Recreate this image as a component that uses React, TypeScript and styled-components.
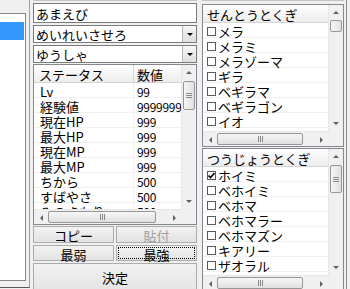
import styled, { createGlobalStyle } from 'styled-components';

const GlobalStyle = createGlobalStyle`
  * { box-sizing: border-box; }
  body {
    margin: 0;
    background: #f0f0f0;
    font-family: "Noto Sans CJK JP", "Noto Sans", sans-serif;
    font-size: 13px;
    color: #000;
  }
`;

const statusRows = [
  ['Lv', '99'],
  ['経験値', '9999999'],
  ['現在HP', '999'],
  ['最大HP', '999'],
  ['現在MP', '999'],
  ['最大MP', '999'],
  ['ちから', '500'],
  ['すばやさ', '500'],
  ['みのまもり', '500'],
  ['かしこさ', '500'],
];

const battleSkills = ['メラ', 'メラミ', 'メラゾーマ', 'ギラ', 'ベギラマ', 'ベギラゴン', 'イオ', 'イオラ'];
const fieldSkills = ['ホイミ', 'ベホイミ', 'ベホマ', 'ベホマラー', 'ベホマズン', 'キアリー', 'ザオラル', 'ザオリク'];

const Window = styled.div`
  display: flex;
  width: 350px;
  height: 289px;
  overflow: hidden;
  background: #f0f0f0;
`;

const LeftPane = styled.div`
  flex: none;
  width: 30px;
  height: 288px;
  padding-top: 13px;
  border-right: 1px solid #a0a0a0;
  border-bottom: 1px solid #5a5a5a;
`;

const LeftList = styled.div`
  width: 26px;
  height: 268px;
  padding-top: 8px;
  background: #fff;
  border: 1px solid #828790;
  border-left: none;
`;

const Selection = styled.div`
  width: 24px;
  height: 18px;
  background: #3399ff;
`;

const Column = styled.div<{ $w: number; $ml: number }>`
  flex: none;
  display: flex;
  flex-direction: column;
  width: ${p => p.$w}px;
  margin-left: ${p => p.$ml}px;
`;

const TopClip = styled.div<{ $mb: number }>`
  height: 2px;
  margin-bottom: ${p => p.$mb}px;
  border-bottom: 1px solid #c4c4c4;
`;

const TextBox = styled.div`
  height: 20px;
  padding: 1px 0 0 2px;
  line-height: 18px;
  background: #fff;
  border: 1px solid #7a7a7a;
`;

const Combo = styled.div`
  display: flex;
  height: 18px;
  margin-top: 2px;
  background: #fff;
  border: 1px solid #7a7a7a;
`;

const ComboText = styled.div`
  flex: 1;
  padding: 1px 0 0 2px;
  line-height: 15px;
`;

const DropButton = styled.div`
  display: flex;
  align-items: center;
  justify-content: center;
  width: 14px;
  border-left: 1px solid #b5b5b5;
  background: linear-gradient(#f6f6f6, #dedede);
  &::after {
    content: '';
    border-left: 3px solid transparent;
    border-right: 3px solid transparent;
    border-top: 3px solid #000;
  }
`;

const ListFrame = styled.div<{ $h: number; $mt: number }>`
  display: grid;
  grid-template-columns: 1fr 15px;
  grid-template-rows: 1fr 15px;
  height: ${p => p.$h}px;
  margin-top: ${p => p.$mt}px;
  background: #fff;
  border: 1px solid #828790;
`;

const ListContent = styled.div`
  overflow: hidden;
`;

const Header = styled.div`
  display: flex;
  height: 18px;
  padding-top: 2px;
  line-height: 15px;
  background: linear-gradient(#ffffff, #ececec);
  border-bottom: 1px solid #d5d5d5;
`;

const HeaderCell = styled.div<{ $w?: number; $pl: number }>`
  flex: ${p => (p.$w ? 'none' : '1')};
  width: ${p => (p.$w ? `${p.$w}px` : 'auto')};
  margin-top: -2px;
  padding: 2px 0 0 ${p => p.$pl}px;
  border-right: ${p => (p.$w ? '1px solid #d5d5d5' : 'none')};
  white-space: nowrap;
`;

const Row = styled.div`
  display: flex;
  align-items: flex-start;
  height: 15px;
  line-height: 13px;
  border-bottom: 1px solid #f0f0f0;
  white-space: nowrap;
`;

const Cell = styled.div<{ $w?: number; $pl: number; $small?: boolean }>`
  flex: ${p => (p.$w ? 'none' : '1')};
  width: ${p => (p.$w ? `${p.$w}px` : 'auto')};
  height: 14px;
  padding: 2px 0 0 ${p => p.$pl}px;
  font-size: ${p => (p.$small ? '12px' : '13px')};
  letter-spacing: ${p => (p.$small ? '-0.3px' : '0')};
  border-right: ${p => (p.$w ? '1px solid #f0f0f0' : 'none')};
`;

const SkillRow = styled(Row)`
  padding: 2px 0 0 4px;
  gap: 2px;
`;

const Check = styled.span`
  flex: none;
  display: flex;
  align-items: center;
  justify-content: center;
  width: 9px;
  height: 9px;
  margin-top: 2px;
  background: #fff;
  border: 1px solid #5a5a5a;
`;

const VBar = styled.div`
  display: flex;
  flex-direction: column;
  background: #f0f0f0;
  border-left: 1px solid #e6e6e6;
`;

const HBar = styled.div`
  display: flex;
  background: #f0f0f0;
  border-top: 1px solid #e6e6e6;
`;

const Corner = styled.div`
  background: #f0f0f0;
`;

const Arrow = styled.div<{ $dir: 'up' | 'down' | 'left' | 'right' }>`
  flex: none;
  display: flex;
  align-items: center;
  justify-content: center;
  width: 14px;
  height: 15px;
  &::after {
    content: '';
    ${p =>
      p.$dir === 'up'
        ? 'border-left: 3px solid transparent; border-right: 3px solid transparent; border-bottom: 3px solid #606060;'
        : p.$dir === 'down'
        ? 'border-left: 3px solid transparent; border-right: 3px solid transparent; border-top: 3px solid #606060;'
        : p.$dir === 'left'
        ? 'border-top: 3px solid transparent; border-bottom: 3px solid transparent; border-right: 3px solid #606060;'
        : 'border-top: 3px solid transparent; border-bottom: 3px solid transparent; border-left: 3px solid #606060;'}
  }
`;

const Track = styled.div<{ $vertical?: boolean }>`
  flex: 1;
  display: flex;
  flex-direction: ${p => (p.$vertical ? 'column' : 'row')};
`;

const VThumb = styled.div<{ $h: number; $top: number }>`
  display: flex;
  align-items: center;
  justify-content: center;
  width: 12px;
  height: ${p => p.$h}px;
  margin: ${p => p.$top}px 0 0 1px;
  border: 1px solid #979797;
  border-radius: 2px;
  background: linear-gradient(to right, #f6f6f6, #e0e0e0);
`;

const HThumb = styled.div<{ $w: number }>`
  display: flex;
  align-items: center;
  justify-content: center;
  width: ${p => p.$w}px;
  height: 12px;
  margin-top: 1px;
  border: 1px solid #979797;
  border-radius: 2px;
  background: linear-gradient(#f6f6f6, #e0e0e0);
`;

const VGrip = styled.span`
  width: 6px;
  height: 5px;
  background: repeating-linear-gradient(#8a8a8a 0 1px, transparent 1px 2px);
`;

const HGrip = styled.span`
  width: 5px;
  height: 6px;
  background: repeating-linear-gradient(to right, #8a8a8a 0 1px, transparent 1px 2px);
`;

const ButtonRow = styled.div<{ $h: number; $mt: number }>`
  display: flex;
  gap: 2px;
  height: ${p => p.$h}px;
  margin-top: ${p => p.$mt}px;
`;

const Button = styled.button<{ $focus?: boolean }>`
  flex: 1;
  height: 100%;
  padding: 2px 0 0;
  font: inherit;
  line-height: 1;
  color: ${p => (p.disabled ? '#a0a0a0' : '#000')};
  background: linear-gradient(#f2f2f2, #e3e3e3);
  border: 1px solid #acacac;
  ${p => (p.$focus ? 'outline: 1px dotted #000; outline-offset: -3px;' : '')}
`;

const BigButton = styled(Button)`
  flex: none;
  height: 30px;
  margin-top: 2px;
  padding: 0 0 2px;
`;

const RightEdge = styled.div`
  flex: 1;
  margin-left: 2px;
  border-left: 1px solid #8a8a8a;
`;

const CheckMark = () => (
  <svg width="7" height="7" viewBox="0 0 7 7">
    <path d="M0.5 3.5 L2.5 5.5 L6.5 1" fill="none" stroke="#000" strokeWidth="1.6" />
  </svg>
);

type ScrollProps = {
  thumbH: number;
  thumbTop: number;
  grip?: boolean;
  hThumb: number;
};

const Scrollbars = ({ thumbH, thumbTop, grip, hThumb }: ScrollProps) => (
  <>
    <VBar>
      <Arrow $dir="up" />
      <Track $vertical>
        <VThumb $h={thumbH} $top={thumbTop}>{grip && <VGrip />}</VThumb>
      </Track>
      <Arrow $dir="down" />
    </VBar>
    <HBar>
      <Arrow $dir="left" />
      <Track>
        <HThumb $w={hThumb}>
          <HGrip />
        </HThumb>
      </Track>
      <Arrow $dir="right" />
    </HBar>
    <Corner />
  </>
);

const SkillList = ({
  title,
  items,
  checked,
  mt,
  thumbH,
  thumbTop,
  grip,
}: {
  title: string;
  items: string[];
  checked: string[];
  mt: number;
  thumbH: number;
  thumbTop: number;
  grip?: boolean;
}) => (
  <ListFrame $h={143} $mt={mt}>
    <ListContent>
      <Header>
        <HeaderCell $pl={4}>{title}</HeaderCell>
      </Header>
      {items.map(name => (
        <SkillRow key={name}>
          <Check>{checked.includes(name) && <CheckMark />}</Check>
          <span>{name}</span>
        </SkillRow>
      ))}
    </ListContent>
    <Scrollbars thumbH={thumbH} thumbTop={thumbTop} grip={grip} hThumb={86} />
  </ListFrame>
);

export default function App() {
  return (
    <>
      <GlobalStyle />
      <Window>
        <LeftPane>
          <LeftList>
            <Selection />
          </LeftList>
        </LeftPane>

        <Column $w={164} $ml={3}>
          <TopClip $mb={2} />
          <TextBox>あまえび</TextBox>
          <Combo>
            <ComboText>めいれいさせろ</ComboText>
            <DropButton />
          </Combo>
          <Combo>
            <ComboText>ゆうしゃ</ComboText>
            <DropButton />
          </Combo>
          <ListFrame $h={161} $mt={1}>
            <ListContent>
              <Header>
                <HeaderCell $w={100} $pl={5}>ステータス</HeaderCell>
                <HeaderCell $pl={3}>数値</HeaderCell>
              </Header>
              {statusRows.map(([label, value]) => (
                <Row key={label}>
                  <Cell $w={100} $pl={6}>{label}</Cell>
                  <Cell $pl={3} $small>{value}</Cell>
                </Row>
              ))}
            </ListContent>
            <Scrollbars thumbH={29} thumbTop={1} grip hThumb={108} />
          </ListFrame>
          <ButtonRow $h={17} $mt={1}>
            <Button>コピー</Button>
            <Button disabled>貼付</Button>
          </ButtonRow>
          <ButtonRow $h={16} $mt={2}>
            <Button>最弱</Button>
            <Button $focus>最強</Button>
          </ButtonRow>
          <BigButton>決定</BigButton>
        </Column>

        <Column $w={142} $ml={5}>
          <TopClip $mb={3} />
          <SkillList title="せんとうとくぎ" items={battleSkills} checked={[]} mt={0} thumbH={12} thumbTop={0} />
          <SkillList
            title="つうじょうとくぎ"
            items={fieldSkills}
            checked={['ホイミ']}
            mt={1}
            thumbH={28}
            thumbTop={1}
            grip
          />
        </Column>

        <RightEdge />
      </Window>
    </>
  );
}
